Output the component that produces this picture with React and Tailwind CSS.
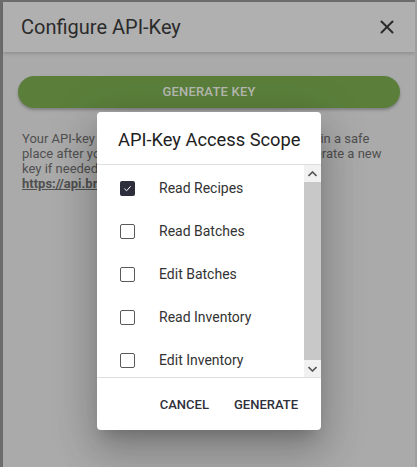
import { X } from 'lucide-react';

const scopes = [
  { label: 'Read Recipes', checked: true },
  { label: 'Read Batches', checked: false },
  { label: 'Edit Batches', checked: false },
  { label: 'Read Inventory', checked: false },
  { label: 'Edit Inventory', checked: false },
];

const Checkbox = ({ checked }) =>
  checked ? (
    <span className="w-[15px] h-[15px] rounded-[2px] bg-[#2c2e3b] flex items-center justify-center">
      <svg width="9" height="9" viewBox="0 0 10 10" fill="none">
        <path d="M1.5 5.2 L4 7.5 L8.5 2.5" stroke="#fff" strokeWidth="1.1" />
      </svg>
    </span>
  ) : (
    <span className="w-[15px] h-[15px] rounded-[2px] border border-[#5a5a5a] bg-white" />
  );

const App = () => {
  return (
    <div className="relative w-[417px] h-[467px] overflow-hidden bg-[#6c6c6c] font-['Roboto',sans-serif]">
      {/* back dialog (dimmed) */}
      <div className="absolute left-[3px] top-[2px] w-[412px] h-[465px] bg-[#aaaaaa]">
        <div className="h-[50px] bg-[#b0b0b0] flex items-center justify-between pl-[18px] pr-[17px] shadow-[0_2px_3px_rgba(0,0,0,0.15)] relative">
          <h1 className="text-[20px] text-[#2b2b2b]">Configure API-Key</h1>
          <X size={22} strokeWidth={2.2} className="text-[#2b2b2b]" />
        </div>
        <div className="px-[15px] pt-[24px]">
          <div className="h-[32px] rounded-full bg-[#5b7f3b] shadow-[0_2px_3px_rgba(0,0,0,0.25)] flex items-center justify-center text-[13px] font-medium text-[#b6b9b2] tracking-[0.2px]">
            GENERATE KEY
          </div>
          <p className="mt-[23px] pl-[4px] text-[13px] leading-[15px] text-[#505050] whitespace-nowrap">
            Your API-key will only be shown now, please store it in a safe<br />
            place after you have generated it. You can also generate a new<br />
            key if needed. Read more in the documentation at<br />
            <span className="font-bold underline">https://api.brewfather.app/docs</span>
          </p>
        </div>
      </div>
      <div className="absolute left-[415px] top-0 w-[2px] h-[467px] bg-[#9e9e9e]" />

      {/* front dialog */}
      <div className="absolute left-[97px] top-[112px] w-[224px] h-[318px] bg-white rounded-[4px] shadow-[0_11px_15px_-7px_rgba(0,0,0,0.2),0_24px_38px_3px_rgba(0,0,0,0.14),0_9px_46px_8px_rgba(0,0,0,0.12)] flex flex-col">
        <div className="h-[53px] pl-[21px] pt-[3px] flex items-center border-b border-[#dedede]">
          <h2 className="text-[18.3px] text-[#1e1e1e] whitespace-nowrap">API-Key Access Scope</h2>
        </div>
        <div className="h-[213px] flex border-b border-[#dedede]">
          <ul className="flex-1 overflow-hidden pt-[2px]">
            {scopes.map((s) => (
              <li key={s.label} className="h-[43px] flex items-center pl-[23px] gap-[24px]">
                <Checkbox checked={s.checked} />
                <span className="text-[14px] text-[#333333]">{s.label}</span>
              </li>
            ))}
          </ul>
          <div className="w-[17px] bg-[#f1f1f1] flex flex-col">
            <div className="h-[17px] flex items-center justify-center">
              <svg width="9" height="6" viewBox="0 0 9 6"><path d="M0.5 5 L4.5 1 L8.5 5" stroke="#555" strokeWidth="1.6" fill="none" /></svg>
            </div>
            <div className="flex-1 bg-[#c8c8c8]" />
            <div className="h-[17px] flex items-center justify-center">
              <svg width="9" height="6" viewBox="0 0 9 6"><path d="M0.5 1 L4.5 5 L8.5 1" stroke="#555" strokeWidth="1.6" fill="none" /></svg>
            </div>
          </div>
        </div>
        <div className="flex-1 flex items-center justify-end pr-[15px] pt-[2px] gap-[9px]">
          <button className="px-[8px] py-[6px] text-[13px] font-medium text-[#2e2f3a]">CANCEL</button>
          <button className="px-[8px] py-[6px] text-[13px] font-medium text-[#2e2f3a]">GENERATE</button>
        </div>
      </div>
    </div>
  );
};

export default App;
